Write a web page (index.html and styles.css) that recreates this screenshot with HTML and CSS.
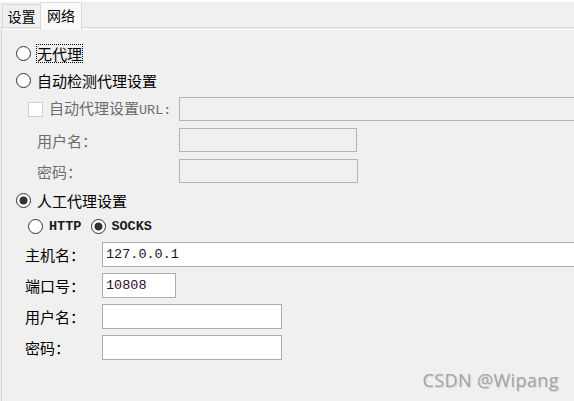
FILE: index.html
```html
<!DOCTYPE html>
<html>
<head>
<meta charset="utf-8">
<link rel="stylesheet" href="styles.css">
</head>
<body>
<div class="tabbar">
  <div class="tab">设置</div>
  <div class="tab active">网络</div>
</div>
<div class="panel">
  <div class="opt-row first"><span class="radio"></span><span class="focus">无代理</span></div>
  <div class="opt-row second"><span class="radio"></span><span>自动检测代理设置</span></div>
  <div class="auto-grid">
    <div class="auto-label"><span class="check"></span><span>自动代理设置<span class="mono">URL:</span></span></div>
    <div class="field disabled wide"></div>
    <div class="auto-label sub">用户名：</div>
    <div class="field disabled w178"></div>
    <div class="auto-label sub">密码：</div>
    <div class="field disabled w179"></div>
  </div>
  <div class="opt-row manual"><span class="radio on"></span><span>人工代理设置</span></div>
  <div class="proto-row">
    <span class="radio"></span><span class="proto">HTTP</span>
    <span class="radio on socks"></span><span class="proto">SOCKS</span>
  </div>
  <div class="form-grid">
    <div class="flabel">主机名：</div>
    <div class="field wide"><span class="val">127.0.0.1</span></div>
    <div class="flabel">端口号：</div>
    <div class="field w74"><span class="val">10808</span></div>
    <div class="flabel">用户名：</div>
    <div class="field w180"></div>
    <div class="flabel">密码：</div>
    <div class="field w180"></div>
  </div>
</div>
<div class="watermark">CSDN @Wipang</div>
</body>
</html>
```

FILE: styles.css
```css
* { box-sizing: border-box; }
html, body {
  margin: 0;
  width: 574px;
  height: 401px;
  overflow: hidden;
  background: #f0f0f0;
}
body {
  position: relative;
  font-family: "Noto Sans CJK SC", "Microsoft YaHei", sans-serif;
  font-size: 15px;
  color: #000;
  border-top: 2px solid #fff;
}
.tabbar {
  height: 26px;
  display: flex;
  align-items: flex-end;
  border-bottom: 1px solid #d9d9d9;
  padding-left: 2px;
  font-size: 14px;
}
.tab {
  height: 23px;
  width: 39px;
  border: 1px solid #d9d9d9;
  border-bottom: none;
  display: flex;
  align-items: center;
  justify-content: center;
  line-height: 1;
}
.tab.active {
  height: 28px;
  width: 42px;
  margin-bottom: -3px;
  margin-left: -1px;
  background: #f9f9f9;
  padding-bottom: 3px;
}
.panel {
  margin-top: 1px;
  border-top: 1px solid #fff;
  margin-left: 1px;
  border-left: 1px solid #d4d4d4;
  height: 372px;
  overflow: hidden;
}
.opt-row {
  display: flex;
  align-items: center;
  padding-left: 14px;
  height: 27px;
  line-height: 1;
}
.opt-row.first { margin-top: 9px; height: 28px; }
.opt-row.manual { margin-top: 4px; height: 26px; }
.radio {
  width: 15px;
  height: 15px;
  border: 1px solid #333;
  border-radius: 50%;
  background: #fff;
  margin-right: 6px;
  flex: none;
}
.radio.on {
  background: radial-gradient(circle, #333 0 3.6px, #fff 4.4px);
}
.focus {
  outline: 1px dotted #000;
  outline-offset: 0px;
  padding: 1px 0;
}
.auto-grid {
  display: grid;
  grid-template-columns: 151px 480px;
  row-gap: 7px;
  margin-top: 3px;
  padding-left: 26px;
  grid-auto-rows: 24px;
  color: #6d6d6d;
}
.auto-label {
  display: flex;
  align-items: center;
  line-height: 1;
}
.auto-label.sub { padding-left: 9px; }
.check {
  width: 15px;
  height: 15px;
  border: 1px solid #cfcfcf;
  background: #fff;
  margin-right: 6px;
}
.mono {
  font-family: "Liberation Mono", monospace;
  font-size: 13.5px;
}
.field {
  height: 100%;
  border: 1px solid #adadad;
  background: #fff;
  display: flex;
  align-items: center;
  padding-left: 3px;
}
.field.disabled {
  background: #f0f0f0;
  border-color: #b4b4b4;
}
.wide { width: 480px; }
.w178 { width: 178px; }
.w179 { width: 179px; }
.w74 { width: 74px; }
.w180 { width: 180px; }
.proto-row {
  display: flex;
  align-items: center;
  height: 27px;
  padding-left: 26px;
}
.proto {
  font-family: "Liberation Mono", monospace;
  font-weight: bold;
  font-size: 13.5px;
  color: #1a1a1a;
}
.radio.socks { margin-left: 10px; margin-right: 5px; }
.form-grid {
  display: grid;
  grid-template-columns: 77px 480px;
  grid-auto-rows: 25px;
  row-gap: 6px;
  margin-top: 2px;
  padding-left: 23px;
}
.flabel {
  display: flex;
  align-items: center;
  line-height: 1;
}
.val {
  font-family: "Liberation Mono", monospace;
  font-size: 13.5px;
  color: #2a0c2e;
}
.watermark {
  position: absolute;
  right: 15px;
  bottom: 12px;
  font-family: "Open Sans", sans-serif;
  font-size: 18px;
  letter-spacing: 0.4px;
  color: #a3a3a3;
  text-shadow: 1px 1px 1px rgba(0,0,0,0.12);
  line-height: 1;
}
```
